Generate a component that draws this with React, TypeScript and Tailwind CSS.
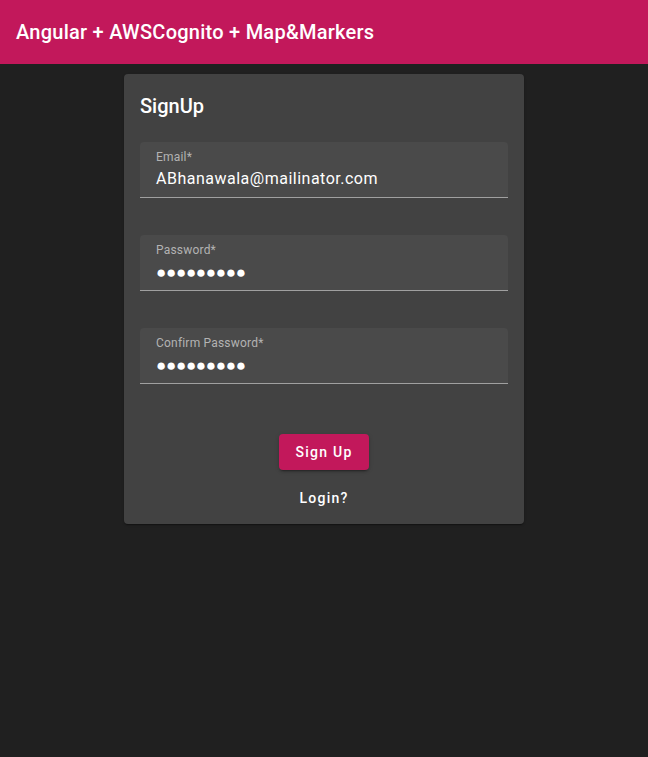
import { ReactNode } from "react";

interface FieldProps {
  label: string;
  children: ReactNode;
}

const Field = ({ label, children }: FieldProps) => {
  return (
    <div className="h-14 rounded-t bg-[#4a4a4a] border-b border-[#a0a0a0] px-4 pt-[7px] flex flex-col">
      <span className="text-[12px] leading-4 text-[#b3b3b3] tracking-[0.2px]">{label}</span>
      <span className="text-[16px] leading-6 mt-[2px] text-white tracking-[0.5px]">{children}</span>
    </div>
  );
};

const Dots = () => <span className="tracking-[-0.3px] text-[17px]">●●●●●●●●●</span>;

export default function App() {
  return (
    <div className="min-h-[757px] bg-[#202020] font-['Roboto','Liberation_Sans',sans-serif]">
      <header className="h-16 bg-[#c2185b] flex items-center px-4">
        <h1 className="text-white text-[20px] font-medium tracking-[0.25px]">Angular + AWSCognito + Map&amp;Markers</h1>
      </header>

      <div className="flex justify-center pt-[10px]">
        <div className="w-[400px] bg-[#424242] rounded shadow-[0_2px_1px_-1px_rgba(0,0,0,0.2),0_1px_1px_0_rgba(0,0,0,0.14),0_1px_3px_0_rgba(0,0,0,0.12)] px-4 pt-4 pb-2">
          <h2 className="text-white text-[20px] font-medium leading-8 mb-5">SignUp</h2>

          <div className="flex flex-col gap-[37px]">
            <Field label="Email*">ABhanawala@mailinator.com</Field>
            <Field label="Password*"><Dots /></Field>
            <Field label="Confirm Password*"><Dots /></Field>
          </div>

          <div className="flex flex-col items-center mt-[50px] gap-[10px]">
            <button className="h-9 px-4 rounded bg-[#c2185b] text-white text-[14px] font-medium tracking-[1.25px] shadow-[0_3px_1px_-2px_rgba(0,0,0,0.2),0_2px_2px_0_rgba(0,0,0,0.14),0_1px_5px_0_rgba(0,0,0,0.12)]">
              Sign Up
            </button>
            <button className="h-9 px-4 text-white text-[14px] font-medium tracking-[1.25px]">
              Login?
            </button>
          </div>
        </div>
      </div>
    </div>
  );
}
